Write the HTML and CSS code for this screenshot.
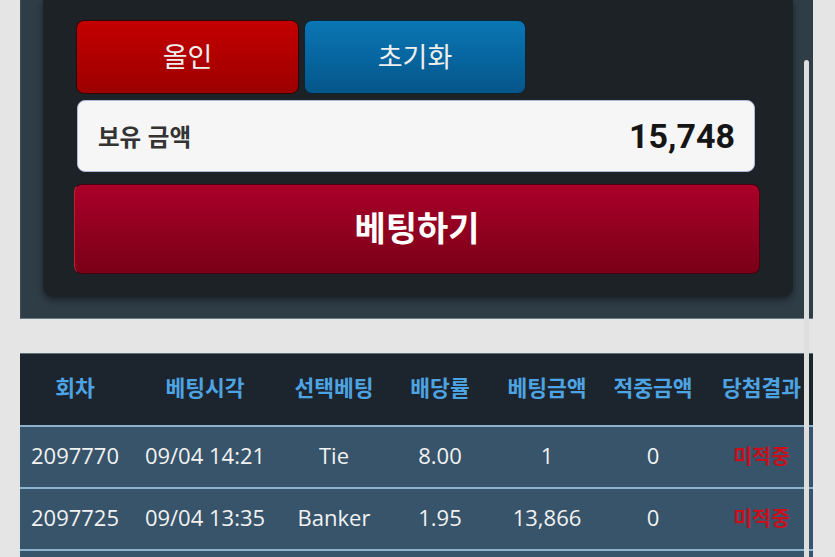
FILE: index.html
```html
<!DOCTYPE html>
<html lang="ko">
<head>
<meta charset="utf-8">
<title>Betting</title>
<link rel="stylesheet" href="styles.css">
</head>
<body>
<div class="page">
  <section class="panel">
    <div class="card">
      <div class="btn-row">
        <button class="btn btn-red">올인</button>
        <button class="btn btn-blue">초기화</button>
      </div>
      <div class="balance">
        <span class="balance-label">보유 금액</span>
        <span class="balance-value">15,748</span>
      </div>
      <button class="bet">베팅하기</button>
    </div>
  </section>

  <div class="table-wrap">
    <table class="history">
      <colgroup>
        <col class="c1"><col class="c2"><col class="c3"><col class="c4"><col class="c5"><col class="c6"><col class="c7">
      </colgroup>
      <thead>
        <tr>
          <th>회차</th><th>베팅시각</th><th>선택베팅</th><th>배당률</th><th>베팅금액</th><th>적중금액</th><th>당첨결과</th>
        </tr>
      </thead>
      <tbody>
        <tr>
          <td>2097770</td><td>09/04 14:21</td><td>Tie</td><td>8.00</td><td>1</td><td>0</td><td class="lose">미적중</td>
        </tr>
        <tr>
          <td>2097725</td><td>09/04 13:35</td><td>Banker</td><td>1.95</td><td>13,866</td><td>0</td><td class="lose">미적중</td>
        </tr>
        <tr class="partial">
          <td></td><td></td><td></td><td></td><td></td><td></td><td></td>
        </tr>
      </tbody>
    </table>
  </div>
</div>
<div class="scrollbar"></div>
</body>
</html>
```

FILE: styles.css
```css
html, body {
  margin: 0;
  padding: 0;
}

body {
  background: #e5e5e5;
  width: 835px;
  height: 557px;
  overflow: hidden;
  font-family: "Noto Sans CJK KR", "Noto Sans", sans-serif;
}

.page {
  padding-left: 20px;
  width: 793px;
}

.panel {
  background: #2f3d47;
  padding: 0 20px 21px 22px;
  border-bottom: 1px solid #6b7b87;
  border-left: 1px solid #3d4c57;
  box-sizing: border-box;
}

.card {
  background: #1d2226;
  border-radius: 0 0 10px 10px;
  padding: 20px 33px 23px 33px;
  box-shadow: 0 3px 7px rgba(0, 0, 0, 0.45);
}

.btn-row {
  display: flex;
  gap: 5px;
}

.btn {
  width: 223px;
  height: 74px;
  border-radius: 8px;
  font-family: "Noto Sans CJK KR", sans-serif;
  font-size: 27px;
  font-weight: 400;
  color: #efefef;
  padding: 0 0 4px 0;
  box-sizing: border-box;
  cursor: pointer;
}

.btn-red {
  background: linear-gradient(#c40000, #9c0000);
  border: 1.5px solid #2e0606;
}

.btn-blue {
  width: 222px;
  background: linear-gradient(#0a76b4, #04568a);
  border: 1.5px solid #0a2536;
}

.balance {
  margin: 6px 5px 0 1px;
  height: 72px;
  box-sizing: border-box;
  background: #f6f6f6;
  border: 1px solid #aeb8d8;
  border-radius: 8px;
  display: flex;
  align-items: center;
  justify-content: space-between;
  padding: 0 19px 0 20px;
}

.balance-label {
  font-size: 23.5px;
  font-weight: 700;
  color: #333333;
}

.balance-value {
  font-family: Roboto, "Liberation Sans", sans-serif;
  font-size: 34px;
  font-weight: 700;
  color: #151515;
}

.bet {
  display: block;
  margin: 12px 0 0 -2px;
  width: calc(100% + 2px);
  height: 90px;
  box-sizing: border-box;
  background: linear-gradient(#aa0029, #790017);
  border: 1px solid #4a0010;
  border-left-color: #c0202e;
  border-radius: 8px;
  color: #ffffff;
  font-family: "Noto Sans CJK KR", sans-serif;
  font-size: 34px;
  font-weight: 700;
  cursor: pointer;
  padding: 0 0 5px 0;
}

.table-wrap {
  margin-top: 34px;
  width: 793px;
  overflow: hidden;
}

.history {
  width: 799px;
  border-collapse: collapse;
  table-layout: fixed;
}

.c1 { width: 110px; }
.c2 { width: 150px; }
.c3 { width: 108px; }
.c4 { width: 104px; }
.c5 { width: 110px; }
.c6 { width: 102px; }
.c7 { width: 115px; }

.history th {
  background: #1c252d;
  color: #4ea4e2;
  font-size: 21.5px;
  font-weight: 700;
  height: 72px;
  padding: 0 0 5px 0;
  text-align: center;
  border-top: 1px solid #5e6e7b;
  border-bottom: 2px solid #8cb2cc;
  white-space: nowrap;
  box-sizing: border-box;
}

.history td {
  background: #37546a;
  color: #f2f2f2;
  font-family: "Open Sans", "Noto Sans", sans-serif;
  font-size: 22px;
  font-weight: 400;
  height: 57px;
  padding: 0 0 3px 0;
  text-align: center;
  border-bottom: 2px solid #8cb2cc;
  white-space: nowrap;
}

.history td.lose {
  font-family: "Noto Sans CJK KR", sans-serif;
  color: #c8101c;
  font-size: 20.5px;
  font-weight: 700;
}

.scrollbar {
  position: fixed;
  left: 804px;
  top: 60px;
  width: 5px;
  height: 520px;
  background: #dedede;
  border-radius: 3px;
}
```
